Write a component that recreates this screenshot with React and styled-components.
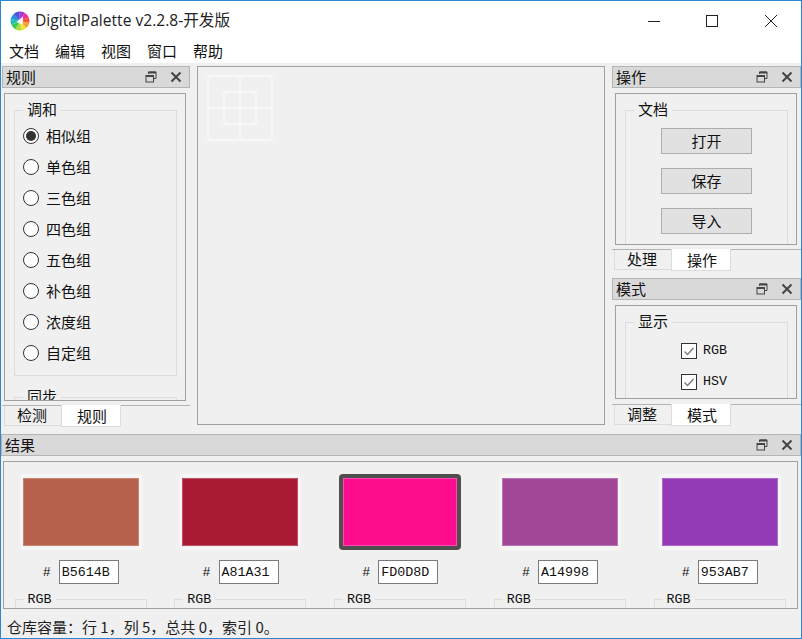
import styled, { createGlobalStyle } from "styled-components"

const GlobalStyle = createGlobalStyle`
  html, body {
    margin: 0;
    padding: 0;
    background: #f0f0f0;
  }
`

const CJK = `"Noto Sans CJK SC", "Noto Sans", sans-serif`
const MONO = `"Liberation Mono", "Noto Sans CJK SC", monospace`

const Window = styled.div`
  width: 802px;
  height: 639px;
  box-sizing: border-box;
  border: 1px solid #2b87cf;
  background: #f0f0f0;
  display: flex;
  flex-direction: column;
  overflow: hidden;
  font-family: ${CJK};
  font-size: 15px;
  color: #111;
`

const TitleBar = styled.div`
  height: 39px;
  flex: none;
  background: #fff;
  display: flex;
  align-items: center;
  padding: 0 1px 0 9px;
`

const AppTitle = styled.span`
  margin-left: 5px;
  padding-bottom: 2px;
  font-family: "Open Sans", ${CJK};
  font-size: 15.6px;
  color: #222;
  flex: 1;
`

const WinButton = styled.div`
  width: 58.5px;
  height: 39px;
  display: flex;
  align-items: center;
  justify-content: center;
`

const MenuBar = styled.div`
  height: 23px;
  box-sizing: border-box;
  flex: none;
  background: #fff;
  display: flex;
  gap: 16px;
  padding: 0 0 2px 8px;
  align-items: center;
`

const Main = styled.div`
  flex: 1;
  min-height: 0;
  padding-top: 3px;
  display: flex;
  flex-direction: column;
`

const TopRow = styled.div`
  height: 361px;
  flex: none;
  display: flex;
  gap: 7px;
  padding-left: 1px;
`

const DockColumn = styled.div`
  width: ${(p) => p.$width}px;
  flex: none;
  display: flex;
  flex-direction: column;
  gap: 7px;
`

const Dock = styled.section`
  display: flex;
  flex-direction: column;
  flex: ${(p) => (p.$grow ? 1 : "none")};
  height: ${(p) => (p.$height ? `${p.$height}px` : "auto")};
  min-height: 0;
`

const DockHeader = styled.header`
  height: 22px;
  flex: none;
  box-sizing: border-box;
  background: #d9d9d9;
  border: 1px solid #b4b4b4;
  display: flex;
  align-items: center;
  padding: 0 7px 0 3px;
`

const DockTitle = styled.span`
  flex: 1;
  padding-bottom: 2px;
`

const DockIcons = styled.div`
  display: flex;
  align-items: center;
  gap: 13px;
`

const Panel = styled.div`
  margin: 5px 0 0 ${(p) => p.$left}px;
  width: ${(p) => p.$width}px;
  height: ${(p) => p.$height}px;
  box-sizing: border-box;
  border: 1px solid #a0a0a0;
  padding-top: 6px;
  overflow: hidden;
  flex: none;
`

const Group = styled.fieldset`
  margin: 0 8px ${(p) => p.$after || 0}px 9px;
  padding: 0;
  height: ${(p) => p.$height}px;
  box-sizing: border-box;
  border: 1px solid #dcdcdc;
  min-width: 0;
`

const GroupLabel = styled.legend`
  margin-left: 8px;
  padding: ${(p) => (p.$mono ? "2px 4px 0" : "0 4px 2px")};
  line-height: 18px;
  font-size: ${(p) => (p.$mono ? 13.33 : 15)}px;
  font-family: ${(p) => (p.$mono ? MONO : CJK)};
`

const RadioList = styled.div`
  display: flex;
  flex-direction: column;
  padding: 0 0 0 8px;
`

const RadioRow = styled.div`
  height: 31px;
  display: flex;
  align-items: center;
  gap: 7px;
`

const RadioMark = styled.span`
  width: 16px;
  height: 16px;
  box-sizing: border-box;
  border: 1px solid #333;
  border-radius: 50%;
  background: #fff;
  display: flex;
  align-items: center;
  justify-content: center;

  &::after {
    content: "";
    width: 10px;
    height: 10px;
    border-radius: 50%;
    background: ${(p) => (p.$on ? "#333" : "transparent")};
  }
`

const TabBar = styled.div`
  height: 22px;
  margin-top: ${(p) => p.$top}px;
  flex: none;
  box-sizing: border-box;
  border-top: 1px solid #b4b4b4;
  display: flex;
  padding-left: ${(p) => p.$left}px;
`

const Tab = styled.div`
  width: ${(p) => (p.$active ? 60 : 57)}px;
  height: ${(p) => (p.$active ? 22 : 20)}px;
  margin-top: ${(p) => (p.$active ? -1 : 0)}px;
  padding: ${(p) => (p.$active ? "0 0 1px 2px" : "0 2px 2px 0")};
  box-sizing: border-box;
  display: flex;
  align-items: center;
  justify-content: center;
  background: ${(p) => (p.$active ? "#fff" : "#f0f0f0")};
  border: 1px solid #dcdcdc;
  border-top: none;
  border-right: ${(p) => (p.$active ? "1px solid #dcdcdc" : "none")};
`

const Canvas = styled.div`
  width: 408px;
  height: 359px;
  flex: none;
  box-sizing: border-box;
  border: 1px solid #a0a0a0;
  padding: 8px 0 0 9px;
`

const ButtonStack = styled.div`
  display: flex;
  flex-direction: column;
  align-items: center;
  gap: 14px;
  padding-top: 8px;
`

const PushButton = styled.div`
  width: 91px;
  height: 26px;
  box-sizing: border-box;
  background: #e1e1e1;
  border: 1px solid #adadad;
  padding-bottom: 2px;
  display: flex;
  align-items: center;
  justify-content: center;
`

const CheckList = styled.div`
  display: flex;
  flex-direction: column;
  padding: 3px 0 0 55px;
`

const CheckRow = styled.div`
  height: 31px;
  display: flex;
  align-items: center;
  gap: 6px;
  font-family: ${MONO};
  font-size: 13.33px;
`

const CheckMark = styled.span`
  width: 16px;
  height: 16px;
  box-sizing: border-box;
  border: 1px solid #333;
  background: #fff;
  display: flex;
  align-items: center;
  justify-content: center;
`

const ResultDock = styled.section`
  margin-top: 7px;
  display: flex;
  flex-direction: column;
  flex: none;
`

const ResultPanel = styled.div`
  margin: 5px 0 0 2px;
  width: 795px;
  height: 148px;
  box-sizing: border-box;
  border: 1px solid #a0a0a0;
  padding: 12px 0 0 1.5px;
  overflow: hidden;
  display: grid;
  grid-template-columns: repeat(5, 150px);
  column-gap: 9.75px;
`

const ResultColumn = styled.div`
  display: flex;
  flex-direction: column;
  align-items: center;
  min-width: 0;
`

const SwatchFrame = styled.div`
  width: 122px;
  height: 76px;
  flex: none;
  box-sizing: border-box;
  border-radius: 4px;
  border: ${(p) => (p.$selected ? "4px solid #4f4f4f" : "3px solid #f7f7f7")};
  padding: ${(p) => (p.$selected ? 0 : 1)}px 0;
  display: flex;
`

const Swatch = styled.div`
  flex: 1;
  background: ${(p) => p.$color};
  border: 1px solid rgba(255, 255, 255, 0.25);
`

const HexRow = styled.div`
  margin: 10px 0 0 0.5px;
  display: flex;
  align-items: center;
  gap: 8px;
  font-family: ${MONO};
  font-size: 13.33px;
`

const HexInput = styled.div`
  width: 60px;
  height: 24px;
  box-sizing: border-box;
  background: #fff;
  border: 1px solid #7a7a7a;
  padding-left: 2px;
  display: flex;
  align-items: center;
`

const ColorGroup = styled(Group)`
  margin: 5px 0 0;
  width: 132px;
  height: 60px;
`

const StatusBar = styled.footer`
  flex: 1;
  display: flex;
  align-items: center;
  padding: 6px 0 0 6px;
  color: #222;
`

const wedge = (cx, cy, r, a0, a1) => {
  const rad = (d) => (d * Math.PI) / 180
  const x0 = cx + r * Math.cos(rad(a0))
  const y0 = cy + r * Math.sin(rad(a0))
  const x1 = cx + r * Math.cos(rad(a1))
  const y1 = cy + r * Math.sin(rad(a1))
  return `M${cx} ${cy}L${x0.toFixed(2)} ${y0.toFixed(2)}A${r} ${r} 0 0 1 ${x1.toFixed(2)} ${y1.toFixed(2)}Z`
}

const WHEEL = ["#f0309a", "#f5503a", "#f8a030", "#f2e23a", "#a8dc3c", "#3cc852", "#22c0b0", "#2a90e0", "#4a55d8", "#a03cd0"]

function Logo() {
  return (
    <svg width="20" height="20" viewBox="0 0 20 20">
      {WHEEL.map((color, i) => (
        <path key={color} d={wedge(10, 10, 9.5, -60 + i * 36, -60 + (i + 1) * 36 + 0.5)} fill={color} />
      ))}
      <path d="M6.5 11L13 5.5L12.5 13.5Z" fill="#fff" />
    </svg>
  )
}

function FloatIcon() {
  return (
    <svg width="12" height="12" viewBox="0 0 12 12" fill="none" stroke="#444">
      <path d="M3.5 3V1H11V7.5H9" strokeWidth="1" />
      <path d="M3.5 1.5H11" strokeWidth="2" />
      <rect x="1" y="4.5" width="7.5" height="6.5" strokeWidth="1" />
      <path d="M1 5H8.5" strokeWidth="2" />
    </svg>
  )
}

function CloseIcon() {
  return (
    <svg width="12" height="12" viewBox="0 0 12 12" fill="none" stroke="#444" strokeWidth="2">
      <path d="M1.5 1.5L10.5 10.5M10.5 1.5L1.5 10.5" />
    </svg>
  )
}

function DockButtons() {
  return (
    <DockIcons>
      <FloatIcon />
      <CloseIcon />
    </DockIcons>
  )
}

function CheckIcon() {
  return (
    <svg width="12" height="12" viewBox="0 0 12 12" fill="none" stroke="#777" strokeWidth="1.3">
      <path d="M1.5 6.5L4.5 9.5L10.5 3" />
    </svg>
  )
}

function CanvasMark() {
  return (
    <svg width="66" height="66" viewBox="0 0 66 66" fill="none" stroke="#f7f7f7" strokeWidth="2" style={{ display: "block" }}>
      <rect x="1" y="1" width="32" height="32" rx="3" />
      <rect x="33" y="1" width="32" height="32" rx="3" />
      <rect x="1" y="33" width="32" height="32" rx="3" />
      <rect x="33" y="33" width="32" height="32" rx="3" />
      <rect x="17" y="17" width="32" height="32" rx="3" />
    </svg>
  )
}

const RULES = ["相似组", "单色组", "三色组", "四色组", "五色组", "补色组", "浓度组", "自定组"]
const COLORS = [
  { hex: "B5614B", color: "#b5614b" },
  { hex: "A81A31", color: "#a81a31" },
  { hex: "FD0D8D", color: "#fd0d8d", selected: true },
  { hex: "A14998", color: "#a14998" },
  { hex: "953AB7", color: "#953ab7" },
]

export default function App() {
  return (
    <Window>
      <GlobalStyle />
      <TitleBar>
        <Logo />
        <AppTitle>DigitalPalette v2.2.8-开发版</AppTitle>
        <WinButton>
          <svg width="12" height="12" viewBox="0 0 12 12" stroke="#222"><path d="M0 6.5H12" /></svg>
        </WinButton>
        <WinButton>
          <svg width="12" height="12" viewBox="0 0 12 12" fill="none" stroke="#222"><rect x="0.5" y="0.5" width="11" height="11" /></svg>
        </WinButton>
        <WinButton>
          <svg width="12" height="12" viewBox="0 0 12 12" stroke="#222"><path d="M0 0L12 12M12 0L0 12" /></svg>
        </WinButton>
      </TitleBar>
      <MenuBar>
        <span>文档</span>
        <span>编辑</span>
        <span>视图</span>
        <span>窗口</span>
        <span>帮助</span>
      </MenuBar>
      <Main>
        <TopRow>
          <DockColumn $width={188}>
            <Dock $grow>
              <DockHeader>
                <DockTitle>规则</DockTitle>
                <DockButtons />
              </DockHeader>
              <Panel $left={2} $width={182} $height={308}>
                <Group $height={276} $after={11}>
                  <GroupLabel>调和</GroupLabel>
                  <RadioList>
                    {RULES.map((rule, i) => (
                      <RadioRow key={rule}>
                        <RadioMark $on={i === 0} />
                        {rule}
                      </RadioRow>
                    ))}
                  </RadioList>
                </Group>
                <Group $height={60}>
                  <GroupLabel>同步</GroupLabel>
                </Group>
              </Panel>
              <TabBar $top={4} $left={2}>
                <Tab>检测</Tab>
                <Tab $active>规则</Tab>
              </TabBar>
            </Dock>
          </DockColumn>
          <Canvas>
            <CanvasMark />
          </Canvas>
          <DockColumn $width={189}>
            <Dock $height={205}>
              <DockHeader>
                <DockTitle>操作</DockTitle>
                <DockButtons />
              </DockHeader>
              <Panel $left={3} $width={182} $height={152}>
                <Group $height={170}>
                  <GroupLabel>文档</GroupLabel>
                  <ButtonStack>
                    <PushButton>打开</PushButton>
                    <PushButton>保存</PushButton>
                    <PushButton>导入</PushButton>
                  </ButtonStack>
                </Group>
              </Panel>
              <TabBar $top={4} $left={2}>
                <Tab>处理</Tab>
                <Tab $active>操作</Tab>
              </TabBar>
            </Dock>
            <Dock $grow>
              <DockHeader>
                <DockTitle>模式</DockTitle>
                <DockButtons />
              </DockHeader>
              <Panel $left={3} $width={182} $height={94}>
                <Group $height={120}>
                  <GroupLabel>显示</GroupLabel>
                  <CheckList>
                    <CheckRow><CheckMark><CheckIcon /></CheckMark>RGB</CheckRow>
                    <CheckRow><CheckMark><CheckIcon /></CheckMark>HSV</CheckRow>
                  </CheckList>
                </Group>
              </Panel>
              <TabBar $top={5} $left={2}>
                <Tab>调整</Tab>
                <Tab $active>模式</Tab>
              </TabBar>
            </Dock>
          </DockColumn>
        </TopRow>
        <ResultDock>
          <DockHeader>
            <DockTitle>结果</DockTitle>
            <DockButtons />
          </DockHeader>
          <ResultPanel>
            {COLORS.map((c) => (
              <ResultColumn key={c.hex}>
                <SwatchFrame $selected={c.selected}>
                  <Swatch $color={c.color} />
                </SwatchFrame>
                <HexRow>
                  #
                  <HexInput>{c.hex}</HexInput>
                </HexRow>
                <ColorGroup $height={60}>
                  <GroupLabel $mono>RGB</GroupLabel>
                </ColorGroup>
              </ResultColumn>
            ))}
          </ResultPanel>
        </ResultDock>
        <StatusBar>仓库容量：行 1，列 5，总共 0，索引 0。</StatusBar>
      </Main>
    </Window>
  )
}
